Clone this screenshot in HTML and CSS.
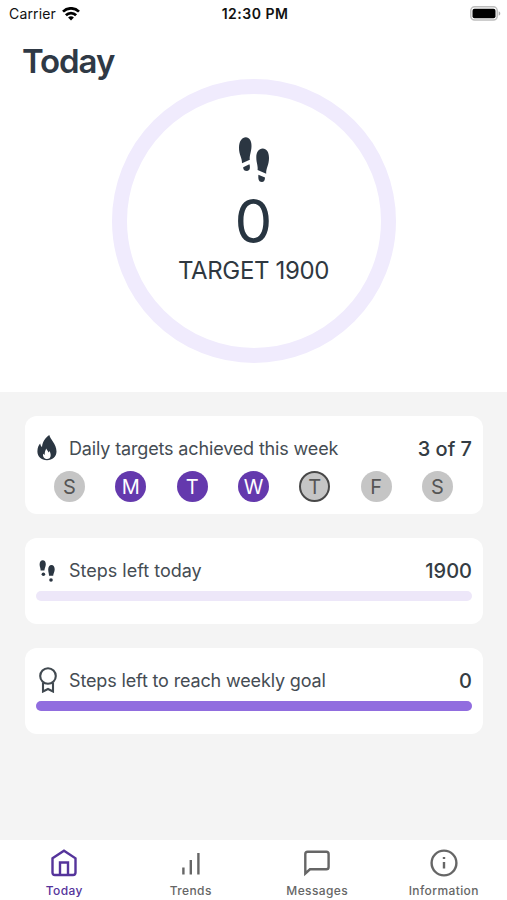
FILE: index.html
```html
<!DOCTYPE html>
<html lang="en">
<head>
  <meta charset="UTF-8">
  <meta name="viewport" content="width=device-width, initial-scale=1.0">
  <title>Today</title>
  <link rel="stylesheet" href="styles.css">
</head>
<body>
  <header class="status-bar">
    <div class="carrier">
      <span>Carrier</span>
      <svg width="18" height="14" viewBox="0 0 18 14" fill="none" stroke="#000" stroke-width="2.700">
        <path d="M1 4.600C5.500 .2 12.500 .2 17 4.600"/>
        <path d="M3.900 8.200C6.700 5.300 11.300 5.300 14.100 8.200"/>
        <path d="M9 13.500L6.100 10.500C7.800 8.900 10.200 8.900 11.900 10.500Z" fill="#000" stroke="none"/>
      </svg>
    </div>
    <div class="clock">12:30 PM</div>
    <svg class="battery" width="31" height="15" viewBox="0 0 31 15">
      <rect x=".8" y=".8" width="26.400" height="13.200" rx="3.800" fill="#fff" stroke="#bdbdbd" stroke-width="1.500"/>
      <rect x="2.500" y="2.700" width="23" height="9.500" rx="2" fill="#000"/>
      <path d="M28.700 5.200C30.800 6 30.800 8.900 28.700 9.700Z" fill="#aaa"/>
    </svg>
  </header>

  <section class="today">
    <h1>Today</h1>
    <div class="ring">
      <svg class="steps" width="32" height="47" viewBox="0 0 32 47">
        <path d="M4 27.300C4.200 22 .8 18.500 1 11.500C1.200 5 4.200 1.300 7.800 1.300C11.500 1.300 13.600 4.800 13.500 10C13.400 16 11.300 19.500 11.800 23.700Z"/>
        <path d="M5.200 31.300L11.400 28.300C12.500 31.500 12 35 8.800 35C5.800 35 5.300 33.200 5.200 31.300Z"/>
        <path d="M19.600 34C20.200 30 18.300 27 18.300 21.500C18.300 16 20.800 12.500 24.700 12.500C28.500 12.500 31 16 31 22C31 29 27.800 32.500 28.200 37.700Z"/>
        <path d="M20.400 38.800L27 41.600C26.800 44.700 26.200 46 23.800 46C20.500 46 20 42.800 20.400 38.800Z"/>
      </svg>
      <div class="count">0</div>
      <div class="target">TARGET 1900</div>
    </div>
  </section>

  <main class="cards">
    <div class="card">
      <div class="card-head">
        <svg class="icon" width="20" height="26" viewBox="0 0 20 26">
          <path fill="#2b3642" d="M12.300 0C13 4 19.500 9 19.500 16.500C19.500 21.500 15.500 25.200 10 25.200C4.400 25.200 .4 21.500 .4 16.500C.4 12.500 1.800 9.800 3.200 8.500C3.500 10.500 4.200 11.500 5 12C5.500 6.500 8.500 2.500 12.300 0Z"/>
          <path fill="#fff" d="M9.300 13.500C10 15.200 11 16 11.600 17.400L12.600 16C14.800 20.500 13.500 24 10.200 24C6.800 24 5.500 21.200 6.200 18.700L7.700 20C7.500 17.500 8.300 15.200 9.300 13.500Z"/>
        </svg>
        <span class="card-label">Daily targets achieved this week</span>
        <span class="card-value">3 of 7</span>
      </div>
      <div class="days">
        <span class="day">S</span>
        <span class="day done">M</span>
        <span class="day done">T</span>
        <span class="day done">W</span>
        <span class="day current">T</span>
        <span class="day">F</span>
        <span class="day">S</span>
      </div>
    </div>

    <div class="card">
      <div class="card-head">
        <svg class="icon steps" width="22" height="24" viewBox="0 0 22 24">
          <path d="M4.600 12.600C4.800 10.300 3.500 8.700 3.600 6.300C3.700 3.700 5 2.200 6.700 2.200C8.600 2.200 9.900 3.800 9.800 6.300C9.700 9 8.500 10.300 8.400 12.600Z"/>
          <circle cx="7.400" cy="16.200" r="1.800"/>
          <path d="M13 17.800C13 15.500 12.200 14 12.200 11.600C12.200 9 13.500 7 15.500 7C17.500 7 18.800 9 18.700 11.600C18.600 14.200 17.300 15.500 17.200 17.800Z"/>
          <circle cx="15" cy="22" r="1.800"/>
        </svg>
        <span class="card-label short">Steps left today</span>
        <span class="card-value">1900</span>
      </div>
      <div class="bar"></div>
    </div>

    <div class="card">
      <div class="card-head">
        <svg class="icon" width="20" height="26" viewBox="0 0 20 26" fill="none" stroke="#414950" stroke-width="2.100">
          <circle cx="11" cy="9" r="7.800"/>
          <path d="M6 15.500V24.500L11 22L16 24.500V15.500"/>
        </svg>
        <span class="card-label">Steps left to reach weekly goal</span>
        <span class="card-value">0</span>
      </div>
      <div class="bar"><div class="bar-fill" style="width: 100%"></div></div>
    </div>
  </main>

  <nav class="tabs">
    <a class="tab active">
      <svg width="28" height="28" viewBox="0 0 28 28">
        <path d="M2.500 9.300L14 1.700L25.500 9.300V23.500C25.500 25.200 24.600 26 23 26H5C3.400 26 2.500 25.200 2.500 23.500Z"/>
        <path d="M10 26V13.500H18V26"/>
      </svg>
      <span>Today</span>
    </a>
    <a class="tab">
      <svg width="28" height="28" viewBox="0 0 28 28">
        <path d="M6.400 18.500V25.500M13.800 11V25.500M21.400 4V25.500"/>
      </svg>
      <span>Trends</span>
    </a>
    <a class="tab">
      <svg width="28" height="28" viewBox="0 0 28 28">
        <path d="M2.300 24.500V5C2.300 3.500 3.300 2.700 4.700 2.700H23.300C24.700 2.700 25.600 3.500 25.600 5V18C25.600 19.500 24.700 20.300 23.300 20.300H7Z"/>
      </svg>
      <span>Messages</span>
    </a>
    <a class="tab">
      <svg width="28" height="28" viewBox="0 0 28 28">
        <circle cx="14" cy="14" r="12.400"/>
        <path d="M14 13V19.500M14 8V10"/>
      </svg>
      <span>Information</span>
    </a>
  </nav>
</body>
</html>
```
FILE: styles.css
```css
body {
  font-family: Inter, "Liberation Sans", sans-serif;
  margin: 0;
  height: 900px;
  display: flex;
  flex-direction: column;
  background: #fff;
  color: #2f3840;
  overflow: hidden;
}
.status-bar {
  display: grid;
  grid-template-columns: 1fr auto 1fr;
  align-items: center;
  height: 27px;
  padding: 0 6px 0 9px;
  color: #111;
  font-size: 14px;
}
.carrier {
  display: flex;
  align-items: center;
  gap: 6px;
  letter-spacing: 0.15px;
}
.clock {
  font-weight: 600;
  letter-spacing: 0.5px;
}
.battery {
  justify-self: end;
}
.today {
  height: 365px;
  display: flex;
  flex-direction: column;
  align-items: center;
}
h1 {
  align-self: flex-start;
  margin: 17px 0 0 22px;
  font-size: 33px;
  line-height: 35px;
  font-weight: 600;
  letter-spacing: -1.1px;
  color: #2f3945;
}
.ring {
  box-sizing: border-box;
  width: 284px;
  height: 284px;
  border: 15px solid #f0ebfd;
  border-radius: 50%;
  display: flex;
  flex-direction: column;
  align-items: center;
  padding-top: 42px;
}
.steps {
  fill: #2b3642;
}
.count {
  font-size: 60px;
  line-height: 60px;
  margin-top: 8px;
  color: #283541;
}
.target {
  font-size: 24px;
  line-height: 30px;
  margin-top: 5px;
  letter-spacing: -0.35px;
  white-space: nowrap;
}
.cards {
  flex: 1;
  display: flex;
  flex-direction: column;
  gap: 24px;
  padding: 24px 24px 0 25px;
  background: #f4f4f4;
}
.card {
  box-sizing: border-box;
  height: 86px;
  padding: 20px 11px 0;
  border-radius: 12px;
  background: #fff;
}
.card:first-child {
  height: 98px;
}
.card-head {
  display: flex;
  align-items: center;
  height: 24px;
}
.icon {
  width: 22px;
  margin-right: 11px;
}
.card-label {
  flex: 1;
  font-size: 18px;
  letter-spacing: -0.15px;
  color: #454c53;
  white-space: nowrap;
}
.card-label.short {
  letter-spacing: 0;
}
.card-value {
  padding-top: 2px;
  font-size: 20px;
  font-weight: 500;
  color: #343c43;
}
.days {
  display: flex;
  justify-content: space-between;
  padding: 11px 19px 0 18px;
}
.day {
  box-sizing: border-box;
  width: 31px;
  height: 31px;
  border-radius: 50%;
  background: #c5c5c5;
  color: #555;
  font-size: 20px;
  line-height: 32px;
  text-align: center;
}
.day.done {
  background: #6439ad;
  color: #fff;
}
.day.current {
  border: 2px solid #484848;
  line-height: 28px;
}
.bar {
  height: 10px;
  margin-top: 9px;
  border-radius: 5px;
  background: #ede7f9;
}
.bar-fill {
  height: 100%;
  border-radius: 5px;
  background: #916ddf;
}
.tabs {
  display: grid;
  grid-template-columns: repeat(4, 1fr);
  height: 60px;
  padding-left: 1px;
}
.tab {
  display: flex;
  flex-direction: column;
  align-items: center;
  padding-top: 9px;
  font-size: 12px;
  font-weight: 500;
  line-height: 16px;
  letter-spacing: 0.4px;
  color: #666;
}
.tab svg {
  fill: none;
  stroke: #666;
  stroke-width: 2.4;
  margin-bottom: 6px;
}
.tab.active {
  color: #55349b;
}
.tab.active svg {
  stroke: #55349b;
}
```
